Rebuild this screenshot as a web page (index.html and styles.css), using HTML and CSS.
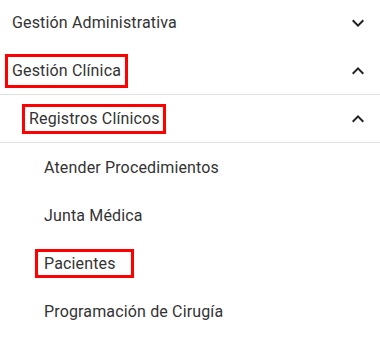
FILE: index.html
```html
<!DOCTYPE html>
<html lang="es">
<head>
<meta charset="utf-8">
<link rel="stylesheet" href="styles.css">
</head>
<body>
<nav class="menu">
  <div class="row first">
    <span class="label lvl1">Gestión Administrativa</span>
    <svg class="chev" viewBox="0 0 24 24"><path d="M16.59 8.59L12 13.17 7.41 8.59 6 10l6 6 6-6z"/></svg>
  </div>
  <div class="row sep">
    <span class="label lvl1"><span class="mark m1">Gestión Clínica</span></span>
    <svg class="chev" viewBox="0 0 24 24"><path d="M12 8l-6 6 1.41 1.41L12 10.83l4.59 4.58L18 14z"/></svg>
  </div>
  <div class="row sep">
    <span class="label lvl2"><span class="mark m2">Registros Clínicos</span></span>
    <svg class="chev" viewBox="0 0 24 24"><path d="M12 8l-6 6 1.41 1.41L12 10.83l4.59 4.58L18 14z"/></svg>
  </div>
  <div class="row"><span class="label lvl3">Atender Procedimientos</span></div>
  <div class="row"><span class="label lvl3">Junta Médica</span></div>
  <div class="row"><span class="label lvl3"><span class="mark m3">Pacientes</span></span></div>
  <div class="row"><span class="label lvl3">Programación de Cirugía</span></div>
</nav>
</body>
</html>
```
FILE: styles.css
```css
html, body {
  margin: 0;
  padding: 0;
  background: #ffffff;
}
body {
  font-family: Roboto, "Noto Sans", Arial, sans-serif;
  font-size: 16px;
  letter-spacing: 0.15px;
  color: #333333;
}
.menu {
  width: 380px;
}
.row {
  display: flex;
  align-items: center;
  justify-content: space-between;
  height: 48px;
  padding-right: 10px;
  box-sizing: border-box;
}
.row.first {
  height: 47px;
  padding-bottom: 2px;
}
.row.sep {
  border-bottom: 1px solid #e0e0e0;
}
.label {
  display: flex;
  align-items: center;
  white-space: nowrap;
}
.lvl1 { padding-left: 12px; }
.lvl2 { padding-left: 29px; }
.lvl3 { padding-left: 44px; }
.mark {
  display: inline-block;
  border: 3px solid #ff0000;
  line-height: 20px;
}
.m1 {
  margin-left: -7px;
  padding: 4px 4px 4px 4px;
}
.m2 {
  margin-left: -7px;
  padding: 2px 3px 2px 4px;
}
.m3 {
  margin-left: -9px;
  padding: 2px 15px 1px 6px;
}
.chev {
  width: 24px;
  height: 24px;
  fill: #222222;
}
```
